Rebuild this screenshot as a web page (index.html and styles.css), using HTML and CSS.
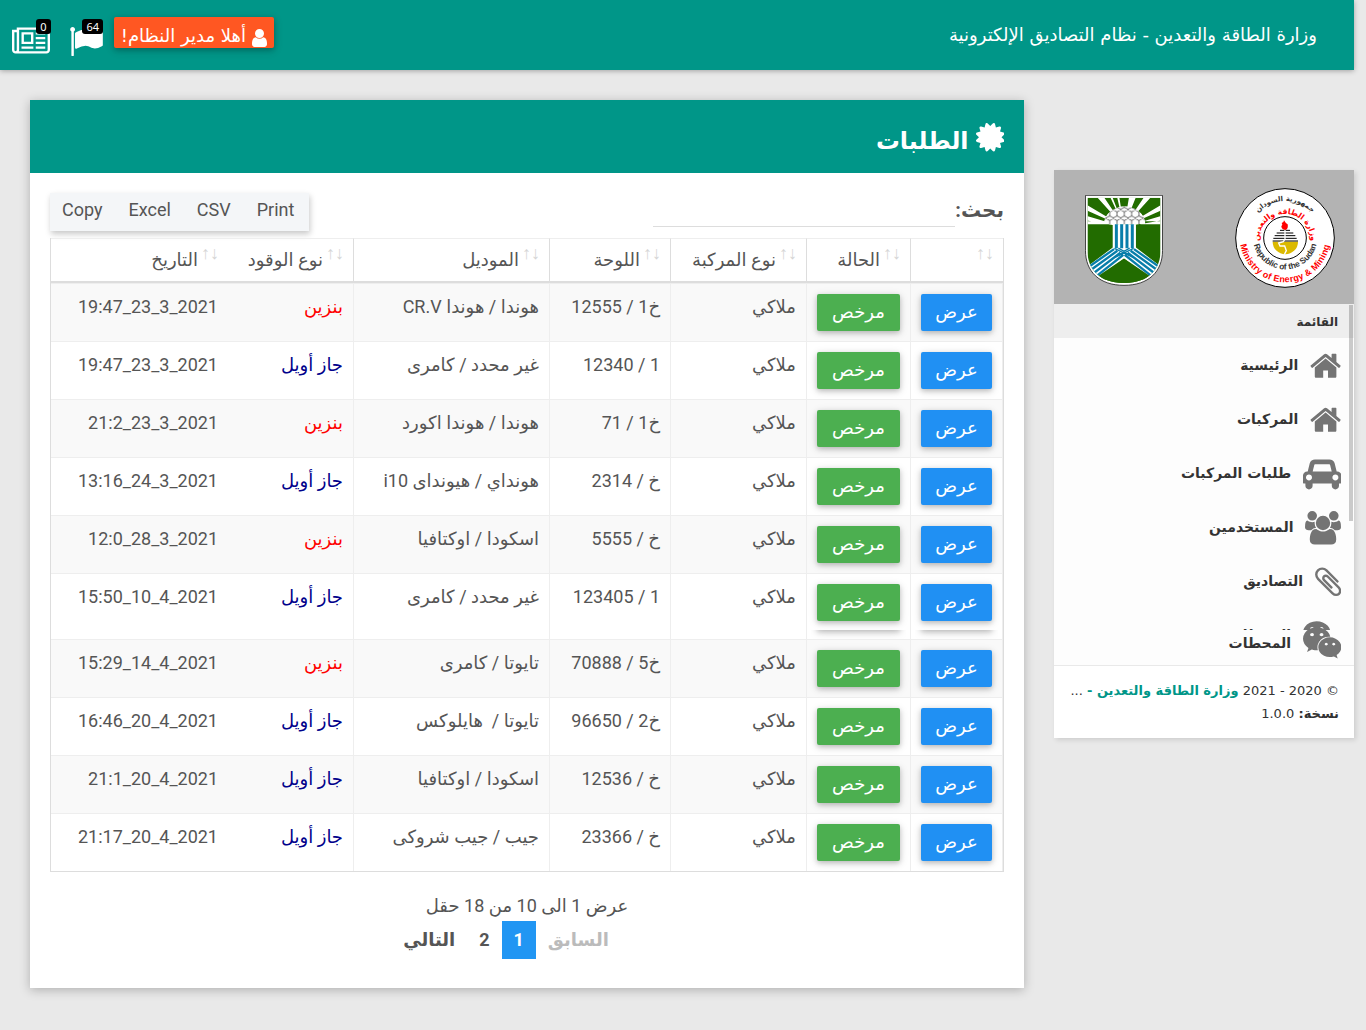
FILE: index.html
```
<!DOCTYPE html>
<html lang="ar" dir="rtl">
<head>
<meta charset="utf-8">
<title>نظام التصاديق الإلكترونية</title>
<link rel="stylesheet" href="styles.css">
</head>
<body>
<svg class="defs" aria-hidden="true">
  <symbol id="home" viewBox="64 0 1664 1792"><path d="M1472 992v480q0 26-19 45t-45 19h-384v-384h-256v384h-384q-26 0-45-19t-19-45v-480q0-1 .5-3t.5-3l575-474 575 474q1 2 1 6zm223-69l-62 74q-8 9-21 11h-3q-13 0-21-7l-692-577-692 577q-12 8-24 7-13-2-21-11l-62-74q-8-10-7-23.5t11-21.5l719-599q32-26 76-26t76 26l244 204v-195q0-14 9-23t23-9h192q14 0 23 9t9 23v408l219 182q10 8 11 21.5t-7 23.5z"/></symbol>
  <symbol id="wechat" viewBox="0 0 2048 1792"><path d="M580 461q0-41-25-66t-66-25q-43 0-76 25.5t-33 65.5q0 39 33 64.5t76 25.5q41 0 66-24.5t25-65.5zm743 507q0-28-25.5-50t-65.5-22q-27 0-49.5 22.5t-22.5 49.5q0 28 22.5 50.5t49.5 22.5q40 0 65.5-22t25.5-51zm-236-507q0-41-24.5-66t-65.5-25q-43 0-76 25.5t-33 65.5q0 39 33 64.5t76 25.5q41 0 65.5-24.5t24.5-65.5zm635 507q0-28-26-50t-65-22q-27 0-49.5 22.5t-22.5 49.5q0 28 22.5 50.5t49.5 22.5q39 0 65-22t26-51zm-266-397q-31-4-70-4-169 0-311 77t-223.5 208.5-81.5 287.5q0 78 23 152-35 3-68 3-26 0-50-1.5t-55-6.5-44.5-7-54.5-10.5-50-10.5l-253 127 72-218q-290-203-290-490 0-169 97.5-311t264-223.5 363.5-81.5q176 0 332.5 66t262 182.5 136.5 260.5zm592 561q0 117-68.5 223.5t-185.5 193.5l55 181-199-109q-150 37-218 37-169 0-311-70.5t-223.5-191.5-81.5-264 81.5-264 223.5-191.5 311-70.5q161 0 303 70.5t227.5 192 85.5 263.5z"/></symbol>
</svg>
<header class="navbar">
  <div class="brand">وزارة الطاقة والتعدين - نظام التصاديق الإلكترونية</div>
  <div class="nav-tools">
    <div class="welcome"><svg class="user-icon" viewBox="256 128 1280 1536"><path d="M1536 1399q0 109-62.5 187t-150.5 78h-854q-88 0-150.5-78t-62.5-187q0-85 8.5-160.5t31.5-152 58.5-131 94-89 134.5-34.5q131 128 313 128t313-128q76 0 134.5 34.5t94 89 58.5 131 31.5 152 8.5 160.5zm-256-887q0 159-112.5 271.5t-271.5 112.5-271.5-112.5-112.5-271.5 112.5-271.5 271.5-112.5 271.5 112.5 112.5 271.5z"/></svg><span>أهلا مدير النظام!</span></div>
    <div class="tool flag"><svg viewBox="64 128 1728 1536"><path d="M320 256q0 72-64 110v1266q0 13-9.5 22.5t-22.5 9.5h-64q-13 0-22.5-9.5t-9.5-22.5v-1266q-64-38-64-110 0-53 37.5-90.5t90.5-37.5 90.5 37.5 37.5 90.5zm1472 64v763q0 25-12.5 38.5t-39.5 27.5q-215 116-369 116-61 0-123.5-22t-108.5-48-115.5-48-142.5-22q-192 0-464 146-17 9-33 9-26 0-45-19t-19-45v-742q0-32 31-55 21-14 79-43 236-120 421-120 107 0 200 29t219 88q38 19 88 19 54 0 117.5-21t110-47 88-47 54.5-21q26 0 45 19t19 45z"/></svg><span class="badge">64</span></div>
    <div class="tool news"><svg viewBox="0 128 2048 1408"><path d="M1024 512h-384v384h384v-384zm128 640v128h-640v-128h640zm0-768v640h-640v-640h640zm640 768v128h-512v-128h512zm0-256v128h-512v-128h512zm0-256v128h-512v-128h512zm0-256v128h-512v-128h512zm-1536 960v-960h-128v960q0 26 19 45t45 19 45-19 19-45zm1664 0v-1088h-1536v1088q0 33-11 64h1483q26 0 45-19t19-45zm128-1216v1216q0 80-56 136t-136 56h-1664q-80 0-136-56t-56-136v-1088h256v-128h1792z"/></svg><span class="badge">0</span></div>
  </div>
</header>
<div class="page">
<aside class="sidebar">
  <div class="logos">
    <svg class="seal" viewBox="553 67 300 300">
      <defs>
        <path id="arc1" d="M606 164A110 110 0 0 1 800 164"/>
        <path id="arc2" d="M625 223A78 78 0 1 1 781 223"/>
        <path id="arc3" d="M610 237A96 96 0 0 0 797 237"/>
        <path id="arc4" d="M569 237A136 136 0 0 0 837 237"/>
      </defs>
      <circle cx="703" cy="217" r="148" fill="#fff" stroke="#000" stroke-width="3"/>
      <circle cx="703" cy="217" r="64" fill="none" stroke="#000" stroke-width="3"/>
      <path d="M666 228h76a38 38 0 0 1-76 0z" fill="#dbb900"/>
      <path d="M688 194h30M678 202h50M672 210h62M668 218h70M666 226h76" stroke="#000" stroke-width="3"/>
      <path d="M703 192v28l-5 8-14 4 4 9h14l5 14-6 12" fill="none" stroke="#fff" stroke-width="4"/>
      <path d="M700 164q4 8 11 12 3 14-7 17-12-2-12-11l3-5-2-5q7-1 7-8z" fill="red"/>
      <g class="seal-text" text-anchor="middle" direction="rtl">
        <text font-size="21"><textPath href="#arc1" startOffset="50%">جمهورية السودان</textPath></text>
        <text font-size="23" fill="red"><textPath href="#arc2" startOffset="50%">وزارة الطاقة والتعدين</textPath></text>
      </g>
      <g class="seal-text latin" direction="ltr">
        <text font-size="25" textLength="258"><textPath href="#arc3">Republic of the Sudan</textPath></text>
        <text font-size="27" fill="red" textLength="378"><textPath href="#arc4">Ministry of Energy &amp; Mining</textPath></text>
      </g>
    </svg>
    <svg class="shield" viewBox="105 89 234 274">
      <defs>
        <clipPath id="field"><path d="M112 97h220v160c0 55-36 97-110 97s-110-42-110-97z"/></clipPath>
        <pattern id="hex" width="22" height="26" patternUnits="userSpaceOnUse" x="3" y="6"><path d="M0 4L11-2 22 4V16L11 22 0 16ZM11 22v6" fill="#fff" stroke="#222" stroke-width="2"/></pattern>
      </defs>
      <path d="M106 90h232v166c0 64-42 105-116 105S106 320 106 256z" fill="#fff" stroke="#222" stroke-width="2.5"/>
      <g clip-path="url(#field)">
        <path d="M110 95h224v260H110z" fill="#226c00"/>
        <path d="M222 185L102 164v-14zM222 185L102 132v-18zM222 185L136 90h22zM222 185L178 90h22zM222 185L207 90h-22zM222 185L238 90h22zM222 185L286 90h22zM222 185L342 132v-18zM222 185L342 164v-14zM110 168h224v9H110z" fill="#fff"/>
        <path d="M188 177h70v70l86 66-30 34-92-66-92 66-30-34 88-66z" fill="#fff"/>
        <path d="M199 177v72M215 177v72M231 177v72M247 177v72" stroke="#087eaa" stroke-width="9"/>
        <path d="M192 252L112 308M202 257L122 315M211 263L132 323M220 269L142 331M252 252L332 308M242 257L322 315M233 263L312 323M224 269L302 331" stroke="#087eaa" stroke-width="7"/>
        <path d="M193 250l58 28M251 250l-58 28M205 249l35 20M239 249l-35 20" stroke="#087eaa" stroke-width="4"/>
        <path d="M222 280L134 340v20h176v-20z" fill="#226c00"/>
      </g>
      <path d="M162 176a62 52 0 0 1 124 0z" fill="#fff"/>
      <path d="M162 176a62 52 0 0 1 124 0z" fill="url(#hex)"/>
    </svg>
  </div>
  <div class="menu">
    <h4>القائمة</h4>
    <ul>
      <li><svg class="w-home"><use href="#home"/></svg><span>الرئيسية</span></li>
      <li><svg class="w-home"><use href="#home"/></svg><span>المركبات</span></li>
      <li><svg class="w-wide" viewBox="0 0 2048 1792"><path d="M480 1088q0-66-47-113t-113-47-113 47-47 113 47 113 113 47 113-47 47-113zm36-320h1016l-89-357q-2-8-14-17.5t-21-9.5h-768q-9 0-21 9.5t-14 17.5zm1372 320q0-66-47-113t-113-47-113 47-47 113 47 113 113 47 113-47 47-113zm160-96v384q0 14-9 23t-23 9h-96v128q0 80-56 136t-136 56-136-56-56-136v-128h-1024v128q0 80-56 136t-136 56-136-56-56-136v-128h-96q-14 0-23-9t-9-23v-384q0-93 65.5-158.5t158.5-65.5h28l105-419q23-94 104-157.5t179-63.5h768q98 0 179 63.5t104 157.5l105 419h28q93 0 158.5 65.5t65.5 158.5z"/></svg><span>طلبات المركبات</span></li>
      <li><svg class="w-users" viewBox="0 0 1920 1792"><path d="M593 896q-162 5-265 128h-134q-82 0-138-40.5t-56-118.5q0-353 124-353 6 0 43.5 21t97.5 42.5 119 21.5q67 0 133-23-5 37-5 66 0 139 81 256zm1071 637q0 120-73 189.5t-194 69.5h-874q-121 0-194-69.5t-73-189.5q0-53 3.5-103.5t14-109 26.5-108.5 43-97.5 62-81 85.5-53.5 111.5-20q10 0 43 21.5t73 48 107 48 135 21.5 135-21.5 107-48 73-48 43-21.5q61 0 111.5 20t85.5 53.5 62 81 43 97.5 26.5 108.5 14 109 3.5 103.5zm-1024-1277q0 106-75 181t-181 75-181-75-75-181 75-181 181-75 181 75 75 181zm704 384q0 159-112.5 271.5t-271.5 112.5-271.5-112.5-112.5-271.5 112.5-271.5 271.5-112.5 271.5 112.5 112.5 271.5zm576 225q0 78-56 118.5t-138 40.5h-134q-103-123-265-128 81-117 81-256 0-29-5-66 66 23 133 23 59 0 119-21.5t97.5-42.5 43.5-21q124 0 124 353zm-128-609q0 106-75 181t-181 75-181-75-75-181 75-181 181-75 181 75 75 181z"/></svg><span>المستخدمين</span></li>
      <li><svg class="w-clip" viewBox="192 0 1408 1792"><path d="M1596 1385q0 117-79 196t-196 79q-135 0-235-100l-777-776q-113-115-113-271 0-159 110-270t269-111q158 0 273 113l605 606q10 10 10 22 0 16-30.5 46.5t-46.5 30.5q-13 0-23-10l-606-607q-79-77-181-77-106 0-179 75t-73 181q0 105 76 181l776 777q63 63 145 63 64 0 106-42t42-106q0-82-63-145l-581-581q-26-24-60-24-29 0-48 19t-19 48q0 32 25 59l410 410q10 10 10 22 0 16-31 47t-47 31q-12 0-22-10l-410-410q-63-61-63-149 0-82 57-139t139-57q88 0 149 63l581 581q100 98 100 235z"/></svg><span>التصاديق</span></li>
      <li class="cut"><svg class="w-wide"><use href="#wechat"/></svg><span>المحطات</span></li>
      <li class="last"><svg class="w-wide"><use href="#wechat"/></svg><span>المحطات</span></li>
    </ul>
    <i class="scrollbar"></i>
  </div>
  <footer class="legal">
    <div>© 2020 - 2021 <b>وزارة الطاقة والتعدين -</b> ...</div>
    <div><strong>نسخة:</strong> 1.0.0</div>
  </footer>
</aside>
<main class="card">
  <div class="card-head"><svg class="cert" viewBox="128 128 1536 1536"><path d="M1504 896l138 135q30 28 20 70-12 41-52 51l-188 48 53 186q12 41-19 70-29 31-70 19l-186-53-48 188q-10 40-51 52-12 2-19 2-31 0-51-22l-135-138-135 138q-28 30-70 20-41-11-51-52l-48-188-186 53q-41 12-70-19-31-29-19-70l53-186-188-48q-40-10-52-51-10-42 20-70l138-135-138-135q-30-28-20-70 12-41 52-51l188-48-53-186q-12-41 19-70 29-31 70-19l186 53 48-188q10-41 51-51 41-12 70 19l135 139 135-139q29-30 70-19 41 10 51 51l48 188 186-53q41-12 70 19 31 29 19 70l-53 186 188 48q40 10 52 51 10 42-20 70z"/></svg><h2>الطلبات</h2></div>
  <div class="card-body">
    <div class="table-tools">
      <label class="search">بحث:<input type="search"></label>
      <div class="exports" dir="ltr"><span>Copy</span><span>Excel</span><span>CSV</span><span>Print</span></div>
    </div>
    <table>
      <colgroup><col class="c1"><col class="c2"><col class="c3"><col class="c4"><col class="c5"><col class="c6"><col></colgroup>
      <thead><tr><th></th><th>الحالة</th><th>نوع المركبة</th><th>اللوحة</th><th>الموديل</th><th>نوع الوقود</th><th>التاريخ</th></tr></thead>
      <tbody>
        <tr><td><a class="btn blue">عرض</a></td><td><a class="btn green">مرخص</a></td><td>ملاكي</td><td>خ1 / 12555</td><td>هوندا / هوندا CR.V</td><td class="petrol">بنزين</td><td><bdi dir="ltr">19:47_23_3_2021</bdi></td></tr>
        <tr><td><a class="btn blue">عرض</a></td><td><a class="btn green">مرخص</a></td><td>ملاكي</td><td>1 / 12340</td><td>غير محدد / كامرى</td><td class="diesel">جاز أويل</td><td><bdi dir="ltr">19:47_23_3_2021</bdi></td></tr>
        <tr><td><a class="btn blue">عرض</a></td><td><a class="btn green">مرخص</a></td><td>ملاكي</td><td>خ1 / 71</td><td>هوندا / هوندا اكورد</td><td class="petrol">بنزين</td><td><bdi dir="ltr">21:2_23_3_2021</bdi></td></tr>
        <tr><td><a class="btn blue">عرض</a></td><td><a class="btn green">مرخص</a></td><td>ملاكي</td><td>خ / 2314</td><td>هونداي / هيونداى i10</td><td class="diesel">جاز أويل</td><td><bdi dir="ltr">13:16_24_3_2021</bdi></td></tr>
        <tr><td><a class="btn blue">عرض</a></td><td><a class="btn green">مرخص</a></td><td>ملاكي</td><td>خ / 5555</td><td>اسكودا / اوكتافيا</td><td class="petrol">بنزين</td><td><bdi dir="ltr">12:0_28_3_2021</bdi></td></tr>
        <tr class="tall"><td><a class="btn blue">عرض</a><i class="edge"></i></td><td><a class="btn green">مرخص</a><i class="edge"></i></td><td>ملاكي</td><td>1 / 123405</td><td>غير محدد / كامرى</td><td class="diesel">جاز أويل</td><td><bdi dir="ltr">15:50_10_4_2021</bdi></td></tr>
        <tr><td><a class="btn blue">عرض</a></td><td><a class="btn green">مرخص</a></td><td>ملاكي</td><td>خ5 / 70888</td><td>تايوتا / كامرى</td><td class="petrol">بنزين</td><td><bdi dir="ltr">15:29_14_4_2021</bdi></td></tr>
        <tr><td><a class="btn blue">عرض</a></td><td><a class="btn green">مرخص</a></td><td>ملاكي</td><td>خ2 / 96650</td><td>تايوتا /&nbsp; هايلوكس</td><td class="diesel">جاز أويل</td><td><bdi dir="ltr">16:46_20_4_2021</bdi></td></tr>
        <tr><td><a class="btn blue">عرض</a></td><td><a class="btn green">مرخص</a></td><td>ملاكي</td><td>خ / 12536</td><td>اسكودا / اوكتافيا</td><td class="diesel">جاز أويل</td><td><bdi dir="ltr">21:1_20_4_2021</bdi></td></tr>
        <tr><td><a class="btn blue">عرض</a></td><td><a class="btn green">مرخص</a></td><td>ملاكي</td><td>خ / 23366</td><td>جيب / جيب شروكى</td><td class="diesel">جاز أويل</td><td><bdi dir="ltr">21:17_20_4_2021</bdi></td></tr>
      </tbody>
    </table>
    <div class="info">عرض 1 الى 10 من 18 حقل</div>
    <nav class="pages"><span class="off">السابق</span><span class="on">1</span><span>2</span><span>التالي</span></nav>
  </div>
</main>
</div>
</body>
</html>
```
FILE: styles.css
```
* { box-sizing: border-box; }
body {
  margin: 0;
  min-height: 1030px;
  background: #e9e9e9;
  color: #555;
  font: 18px/26px Roboto, "DejaVu Sans", sans-serif;
}
.defs { display: none; }
svg { fill: currentColor; flex: none; }

.navbar {
  width: 1354px;
  height: 70px;
  margin-right: auto;
  margin-left: 0;
  padding: 0 37px 0 12px;
  background: #009688;
  color: #fff;
  font-family: "DejaVu Sans", sans-serif;
  box-shadow: 0 1px 5px rgba(0, 0, 0, .3);
  display: flex;
  justify-content: space-between;
}
.brand { padding-top: 22px; }
.nav-tools { display: flex; align-items: flex-start; }
.welcome {
  width: 160px;
  height: 31px;
  margin-top: 17px;
  padding: 0 6px;
  border-radius: 2px;
  background: #ff5722;
  box-shadow: 0 2px 5px rgba(0, 0, 0, .16), 0 2px 10px rgba(0, 0, 0, .2);
  display: flex;
  gap: 5px;
  line-height: 38px;
  white-space: nowrap;
}
.user-icon { width: 17px; height: 18px; margin-top: 12px; }
.tool { position: relative; }
.tool svg { display: block; }
.flag { margin: 27px 11px 0 20px; }
.flag svg { width: 33px; height: 29px; }
.news { margin-top: 26.5px; }
.news svg { width: 38px; height: 27px; }
.badge {
  position: absolute;
  top: -8px;
  right: 0;
  min-width: 15px;
  padding: 0 4px;
  border-radius: 3px;
  background: #000;
  text-align: center;
  font: 11px/15px "Noto Sans", sans-serif;
}
.news .badge { top: -7.5px; right: -1px; }

.page {
  width: 1354px;
  margin-right: auto;
  margin-left: 0;
  padding: 30px 0 0 30px;
  display: flex;
  gap: 30px;
  align-items: flex-start;
}
.sidebar {
  width: 300px;
  height: 568px;
  margin-top: 70px;
  background: #fdfdfd;
  box-shadow: 2px 2px 5px rgba(0, 0, 0, .12);
  color: #333;
  font-family: "DejaVu Sans", sans-serif;
}
.logos {
  height: 134px;
  padding: 17px 19px 0 31px;
  background: #b3b3b3;
  display: flex;
  justify-content: space-between;
}
.seal { width: 100px; height: 100px; margin-top: .5px; }
.seal-text { font-family: "DejaVu Sans", sans-serif; font-weight: bold; }
.seal-text.latin { font-family: "Liberation Sans", sans-serif; }
.shield { width: 78px; height: 91px; margin-top: 8px; }
.menu { position: relative; height: 361px; }
.menu h4 {
  margin: 0;
  height: 34px;
  padding: 0 16px;
  background: #eee;
  font-size: 12px;
  line-height: 36px;
}
.menu ul { margin: 0; padding: 0; list-style: none; }
.menu li {
  height: 54px;
  padding-right: 13px;
  display: flex;
  align-items: center;
  gap: 11.5px;
  font-weight: bold;
  font-size: 14px;
}
.menu svg { color: #747474; height: 33.6px; margin-top: 1.5px; }
.w-home { width: 31.2px; }
.w-wide { width: 38.4px; }
.w-users { width: 36px; }
.w-clip { width: 26.4px; }
.menu li.cut { height: 22px; overflow: hidden; align-items: flex-start; padding-top: 10px; }
.cut span { padding-top: 4px; }
.menu li.last { height: 34px; align-items: flex-start; }
.menu .last svg { margin-top: -4px; }
.scrollbar {
  position: absolute;
  top: 1px;
  right: 1px;
  width: 4px;
  height: 216px;
  background: rgba(0, 0, 0, .2);
}
.legal {
  height: 73px;
  padding: 13px 15px;
  border-top: 1px solid #e9e9e9;
  background: #fff;
  font-size: 13px;
  line-height: 23px;
  white-space: nowrap;
}
.legal b { color: #009688; }

.card {
  width: 994px;
  height: 888px;
  background: #fff;
  box-shadow: 0 2px 10px rgba(0, 0, 0, .25);
}
.card-head {
  height: 73px;
  padding: 23px 20px 0;
  background: #009688;
  color: #fff;
  display: flex;
  gap: 7px;
}
.cert { width: 28.5px; height: 28.5px; }
.card-head h2 { margin: 0; font-size: 23.8px; line-height: 36px; }
.card-body { padding: 20px; }
.table-tools { height: 45px; display: flex; justify-content: space-between; align-items: flex-start; }
.search { display: flex; font-weight: bold; font-size: 20px; line-height: 34px; }
.search input {
  width: 302px;
  height: 34px;
  padding: 0;
  border: 0;
  border-bottom: 1px solid #ddd;
  outline: 0;
}
.exports {
  width: 259px;
  height: 38px;
  padding-left: 12px;
  background: #f4f6f8;
  box-shadow: 1px 3px 6px rgba(0, 0, 0, .22);
  display: flex;
  gap: 26px;
  line-height: 34px;
}
table {
  width: 954px;
  table-layout: fixed;
  border-collapse: separate;
  border-spacing: 0;
  border: solid #ddd;
  border-width: 0 1px 1px;
}
.c1 { width: 93px; }
.c2 { width: 104px; }
.c3 { width: 136px; }
.c4 { width: 121px; }
.c5 { width: 196px; }
.c6 { width: 125px; }
th {
  position: relative;
  height: 45px;
  padding: 0 30px 0 0;
  border-top: 1px solid #eee;
  border-bottom: 2px solid #ddd;
  border-left: 1px solid #ddd;
  font-weight: normal;
  text-align: right;
  white-space: nowrap;
  vertical-align: top;
  line-height: 42px;
}
th::before,
th::after {
  content: "↓";
  position: absolute;
  top: 4px;
  right: 9px;
  color: #d5d5d5;
  font: 18px/20px "Liberation Sans", sans-serif;
}
th::after { content: "↑"; right: 18px; }
td {
  height: 58px;
  padding: 10px 10px 0;
  border-bottom: 1px solid #eee;
  border-left: 1px solid #eee;
  vertical-align: top;
  white-space: nowrap;
}
td:first-child { border-right: 1px solid #eee; }
th:nth-child(n+6), td:nth-child(n+6) { border-left: 0; }
tbody tr:nth-child(odd) { background: #f9f9f9; }
tbody tr:first-child td { border-top: 1px solid #eee; height: 59px; }
tbody tr:last-child td { border-bottom: 0; height: 57px; }
.tall td { height: 66px; }
.petrol { color: red; }
.diesel { color: #00008b; }
.btn {
  display: block;
  height: 37px;
  border-radius: 2px;
  color: #fff;
  text-align: center;
  line-height: 36px;
}
.btn, .edge::before { box-shadow: 0 2px 5px rgba(0, 0, 0, .18), 0 2px 10px rgba(0, 0, 0, .14); }
.blue { background: #2090f3; }
.green { background: #4caf50; }
.edge {
  display: block;
  height: 9px;
  margin: 9px -6px 0;
  overflow: hidden;
}
.edge::before {
  content: "";
  display: block;
  height: 37px;
  margin: -37px 6px 0;
}
.info { margin-top: 21px; text-align: center; }
.pages { margin: 2px 42px 0 0; display: flex; justify-content: center; font-weight: bold; }
.pages span { height: 38px; padding: 0 12px; line-height: 38px; }
.pages .on { background: #2196f3; color: #fff; }
.pages .off { color: #bbb; }
```
